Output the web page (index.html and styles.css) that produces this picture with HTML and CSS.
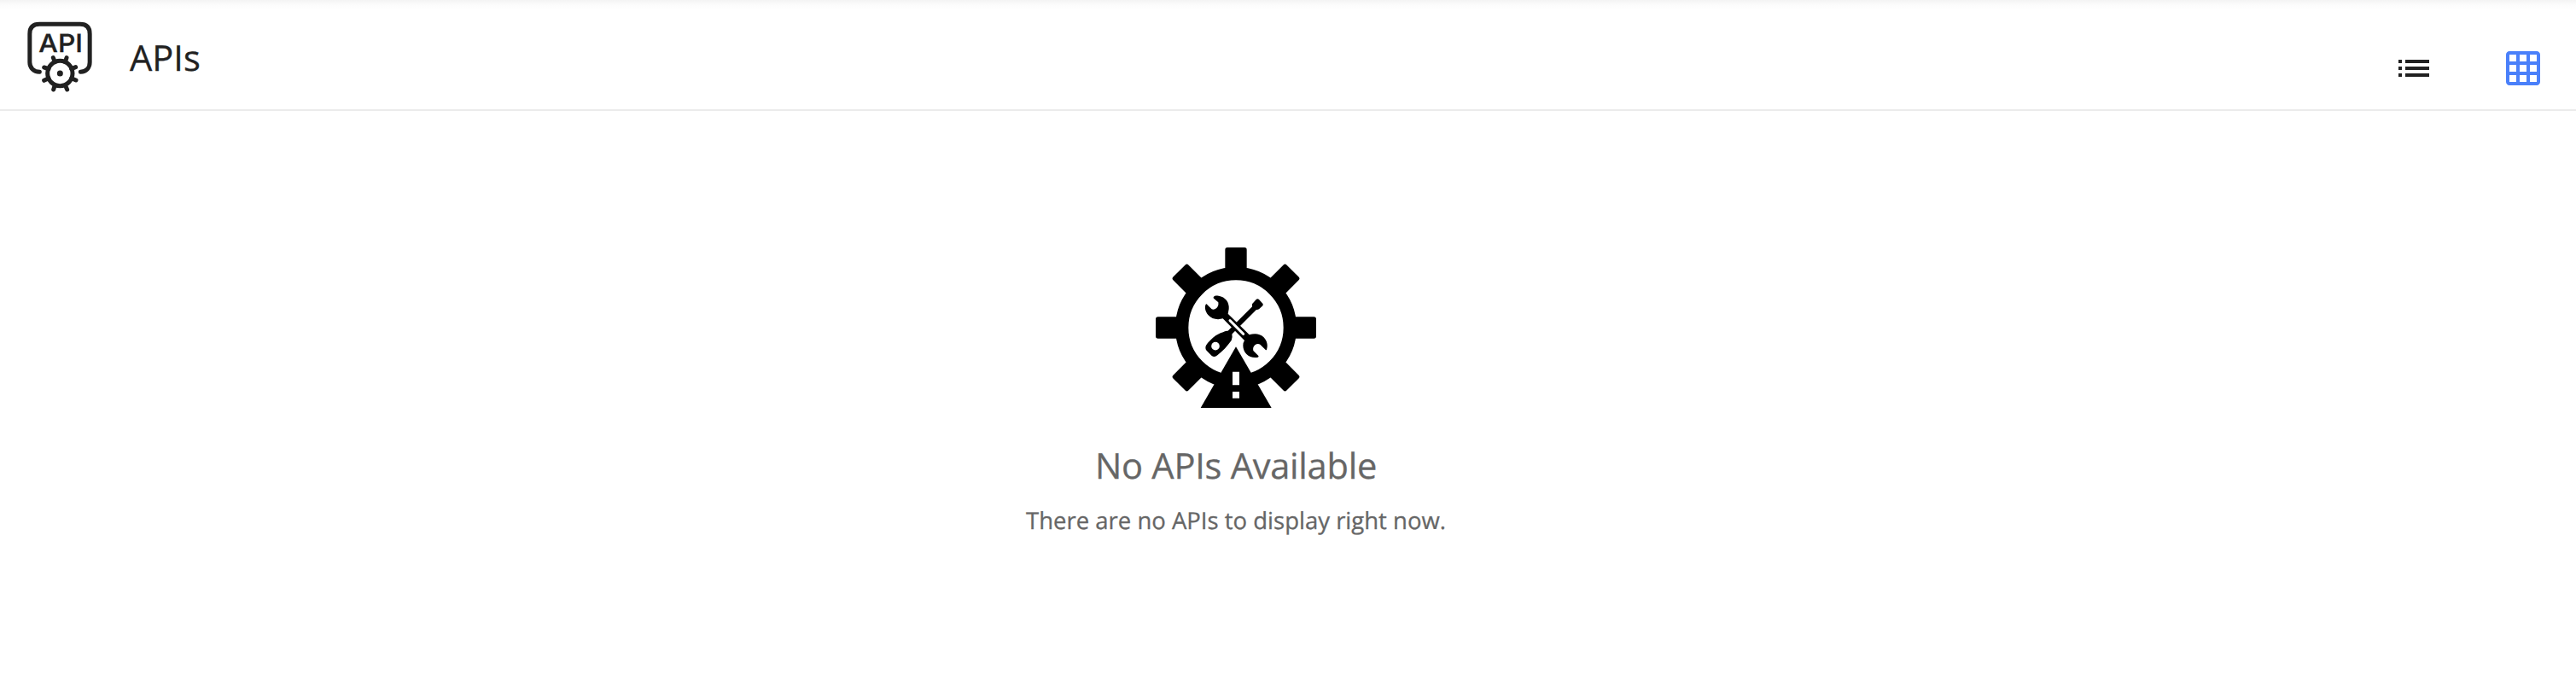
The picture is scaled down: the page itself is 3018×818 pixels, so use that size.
FILE: index.html
```html
<!DOCTYPE html>
<html lang="en">
<head>
<meta charset="utf-8">
<title>APIs</title>
<link rel="stylesheet" href="styles.css">
</head>
<body>
<header class="topbar">
  <svg class="api-logo" viewBox="96 75 228 249" aria-hidden="true">
    <g fill="none" stroke="#212121" stroke-width="15" stroke-linecap="round">
      <path d="M139 253C118 252 104.500 238 104.500 219V119Q104.500 85 138.500 85H281.500Q315.500 85 315.500 119V219C315.500 238 303 252 283 253"/>
      <circle cx="211" cy="258" r="44"/>
      <path d="M193 218L187 203M229 218L234 203M251 242L266 236M251 275L267 282M229 299L236 315M193 299L188 315M171 275L155 283M171 242L155 237"/>
    </g>
    <circle cx="211" cy="258" r="10.500" fill="#212121"/>
    <text class="logo-text" x="136" y="181.500" textLength="155" lengthAdjust="spacingAndGlyphs">API</text>
  </svg>
  <h1 class="title">APIs</h1>
  <nav class="views">
    <button class="view" aria-label="List view"><svg viewBox="0 0 24 24"><path d="M3 13h2v-2H3v2zm0 4h2v-2H3v2zm0-8h2V7H3v2zm4 4h14v-2H7v2zm0 4h14v-2H7v2zM7 7v2h14V7H7z"/></svg></button>
    <button class="view view-active" aria-label="Grid view"><svg viewBox="0 0 24 24"><path d="M20 2H4c-1.100 0-2 .9-2 2v16c0 1.100.9 2 2 2h16c1.100 0 2-.9 2-2V4c0-1.100-.9-2-2-2zM8 20H4v-4h4v4zm0-6H4v-4h4v4zm0-6H4V4h4v4zm6 12h-4v-4h4v4zm0-6h-4v-4h4v4zm0-6h-4V4h4v4zm6 12h-4v-4h4v4zm0-6h-4v-4h4v4zm0-6h-4V4h4v4z"/></svg></button>
  </nav>
</header>
<main class="empty">
  <svg class="empty-icon" viewBox="42 30 564 564" aria-hidden="true">
    <defs><rect id="tooth" x="286" y="30" width="76" height="100" rx="8"/></defs>
    <circle cx="324" cy="312" r="190" fill="none" stroke="#000" stroke-width="46"/>
    <use href="#tooth"/>
    <use href="#tooth" transform="rotate(45 324 312)"/>
    <use href="#tooth" transform="rotate(90 324 312)"/>
    <use href="#tooth" transform="rotate(135 324 312)"/>
    <use href="#tooth" transform="rotate(225 324 312)"/>
    <use href="#tooth" transform="rotate(270 324 312)"/>
    <use href="#tooth" transform="rotate(315 324 312)"/>
    <path d="M324 379L449 594H200Z"/>
    <path d="M312 467h24v47h-24zM312 537h24v23h-24z" fill="#fff"/>
    <path d="M390 242L300 332" stroke="#000" stroke-width="18"/>
    <path d="M395 213Q400 209 405 213L418 227Q421 231 418 235L406 246Q400 251 389 248L384 243Q379 236 381 229Z"/>
    <path d="M279 328Q287 321 300 324L310 334Q313 346 308 357C294 377 277 395 259 409Q249 418 239 411L222 394Q214 385 219 374C234 354 254 335 279 328Z"/>
    <circle cx="252" cy="377" r="14.500" fill="#fff"/>
    <path d="M245 205C247 199 255 199 263 200C287 203 302 224 299 247L296 263L371 337C389 331 407 332 421 345C434 358 437 375 432 389Q430 393 426 388L409 371Q400 366 391 373Q382 381 385 393L403 411Q406 416 397 417C370 420 349 400 349 375Q349 364 354 357L278 280C261 285 239 283 226 267C216 254 213 240 218 230Q220 227 225 233L239 247Q247 251 256 243Q264 235 262 223L247 210Q244 208 245 205Z"/>
    <path d="M303 287L350 334" stroke="#fff" stroke-width="9" stroke-linecap="round"/>
  </svg>
  <h2 class="empty-title">No APIs Available</h2>
  <p class="empty-text">There are no APIs to display right now.</p>
</main>
</body>
</html>
```
FILE: styles.css
```css
* {
  box-sizing: border-box;
}

body {
  margin: 0;
  background: #fff;
  font-family: "Open Sans", "Noto Sans", sans-serif;
  text-rendering: geometricPrecision;
}

.topbar {
  display: flex;
  align-items: flex-start;
  height: 130px;
  padding: 0 38px 0 32px;
  border-bottom: 2px solid #ebebeb;
  background: linear-gradient(#f4f4f4, #fcfcfc 6px, #fff 12px);
}

.api-logo {
  width: 76px;
  height: 83px;
  margin-top: 25px;
}

.logo-text {
  font-family: Inter, sans-serif;
  font-size: 88px;
  font-weight: 500;
  fill: #212121;
  stroke: #212121;
  stroke-width: 1px;
}

.title {
  margin: 38px 0 0 44px;
  color: #212121;
  font-size: 41.6px;
  font-weight: 400;
  line-height: 60px;
  -webkit-text-stroke: 0.3px currentColor;
}

.views {
  display: flex;
  gap: 80px;
  margin: 56px 0 0 auto;
}

.view {
  width: 48px;
  height: 48px;
  padding: 0;
  border: 0;
  background: none;
  color: #212121;
}

.view svg {
  display: block;
  width: 48px;
  height: 48px;
  fill: currentColor;
}

.view-active {
  color: #4a80fa;
}

.empty {
  display: flex;
  flex-direction: column;
  align-items: center;
  width: 2896px;
  padding-top: 160px;
}

.empty-icon {
  width: 188px;
  height: 188px;
}

.empty-title {
  margin: 38px 0 0;
  color: #666;
  font-size: 41.6px;
  font-weight: 400;
  letter-spacing: -0.25px;
  line-height: 60px;
  -webkit-text-stroke: 0.3px currentColor;
}

.empty-text {
  margin: 15px 0 0;
  color: #666;
  font-size: 27.5px;
  line-height: 40px;
  -webkit-text-stroke: 0.3px currentColor;
}
```
